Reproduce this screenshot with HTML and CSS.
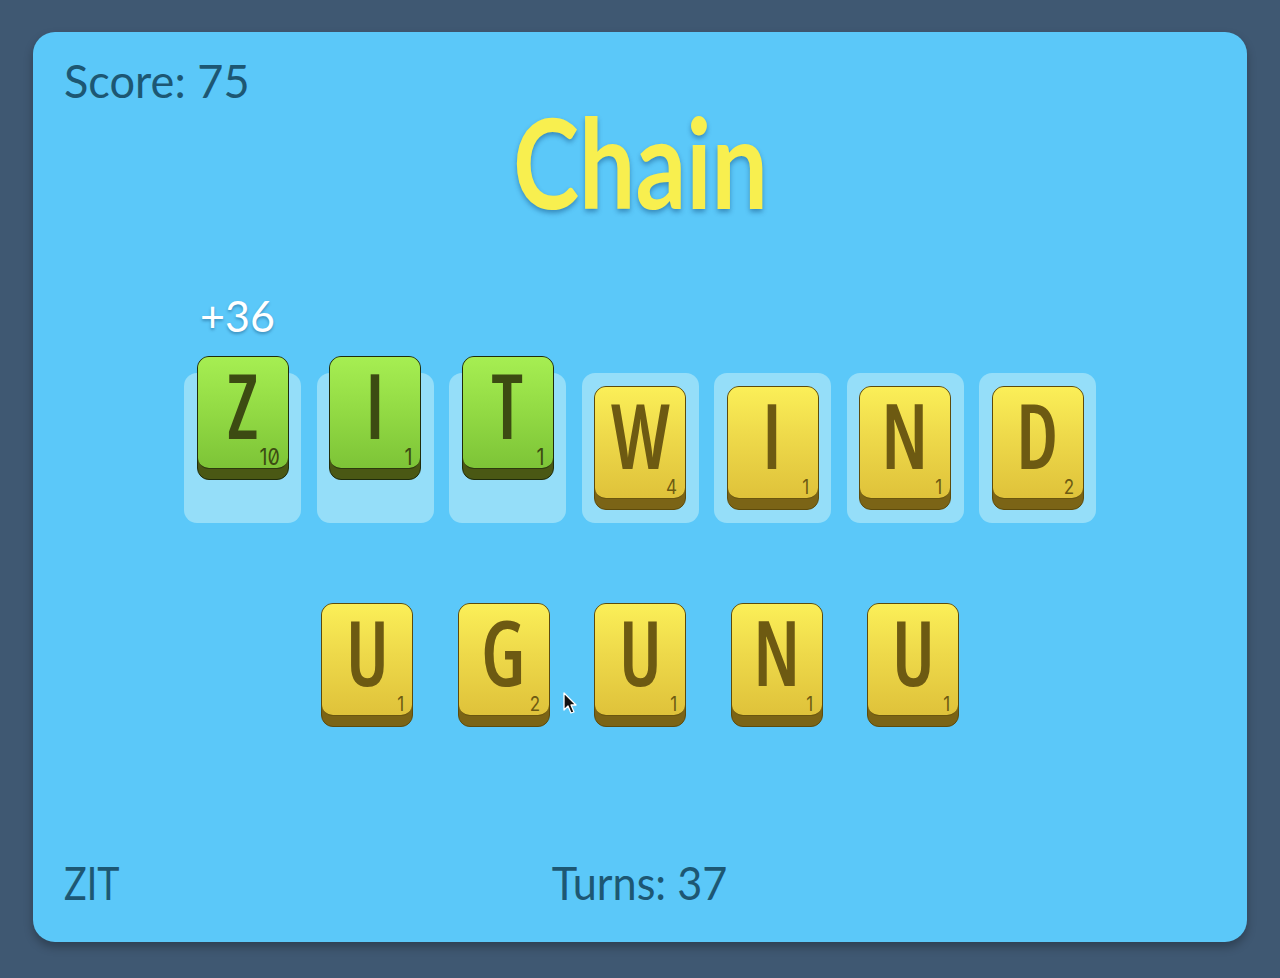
FILE: index.html
```html
<!DOCTYPE html>
<html lang="en">
<head>
<meta charset="utf-8">
<title>Chain</title>
<link rel="stylesheet" href="styles.css">
</head>
<body>
<div class="page">
  <main class="card">
    <div class="score"><span class="narrow">Score: 75</span></div>
    <h1 class="title"><span class="title-text">Chain</span></h1>

    <div class="board">
      <div class="slot">
        <div class="gain"><span class="narrow">+36</span></div>
        <div class="tile green lifted"><div class="face"><span class="letter">Z</span><span class="pts">10</span></div></div>
      </div>
      <div class="slot">
        <div class="tile green lifted"><div class="face"><span class="letter">I</span><span class="pts">1</span></div></div>
      </div>
      <div class="slot">
        <div class="tile green lifted"><div class="face"><span class="letter">T</span><span class="pts">1</span></div></div>
      </div>
      <div class="slot">
        <div class="tile"><div class="face"><span class="letter">W</span><span class="pts">4</span></div></div>
      </div>
      <div class="slot">
        <div class="tile"><div class="face"><span class="letter">I</span><span class="pts">1</span></div></div>
      </div>
      <div class="slot">
        <div class="tile"><div class="face"><span class="letter">N</span><span class="pts">1</span></div></div>
      </div>
      <div class="slot">
        <div class="tile"><div class="face"><span class="letter">D</span><span class="pts">2</span></div></div>
      </div>
    </div>

    <div class="rack">
      <div class="tile"><div class="face"><span class="letter">U</span><span class="pts">1</span></div></div>
      <div class="tile"><div class="face"><span class="letter">G</span><span class="pts">2</span></div>
        <svg class="cursor" width="16" height="24" viewBox="0 0 16 24"><path d="M1 1 L1 18 L5 14 L8 21 L11 20 L8 13 L13 13 Z" fill="#111" stroke="#fff" stroke-width="1.3" stroke-linejoin="round"/></svg>
      </div>
      <div class="tile"><div class="face"><span class="letter">U</span><span class="pts">1</span></div></div>
      <div class="tile"><div class="face"><span class="letter">N</span><span class="pts">1</span></div></div>
      <div class="tile"><div class="face"><span class="letter">U</span><span class="pts">1</span></div></div>
    </div>

    <footer class="footer">
      <div class="word"><span class="narrow">ZIT</span></div>
      <div class="turns"><span class="narrow">Turns: 37</span></div>
      <div></div>
    </footer>
  </main>
</div>
</body>
</html>
```

FILE: styles.css
```css
html, body {
  margin: 0;
  padding: 0;
  background: #3f5872;
}

body {
  font-family: "Lato", "Open Sans", sans-serif;
}

.page {
  padding: 32px 33px 36px 33px;
}

.card {
  width: 1214px;
  height: 910px;
  box-sizing: border-box;
  background: #5bc8f9;
  border-radius: 22px;
  box-shadow: 0 5px 10px rgba(0, 0, 0, 0.28);
  display: flex;
  flex-direction: column;
  padding: 25px 31px 36px 31px;
}

.narrow {
  display: inline-block;
  transform-origin: left center;
}

.score,
.word,
.turns {
  font-size: 47px;
  line-height: 47px;
  color: #1d5773;
  height: 47px;
  white-space: nowrap;
}

.score .narrow {
  transform: scaleX(0.96);
}

.word .narrow {
  transform: scaleX(0.8);
}

.turns .narrow {
  transform: scaleX(0.92);
  transform-origin: center center;
}

.title {
  margin: -5px 0 0 0;
  text-align: center;
  font-weight: 700;
  font-size: 125px;
  line-height: 125px;
  height: 125px;
  color: #f8ef4f;
}

.title-text {
  display: inline-block;
  transform: scaleX(0.8);
  text-shadow: 0 3px 6px rgba(0, 50, 100, 0.4);
}

.board {
  margin-top: 149px;
  display: flex;
  justify-content: center;
  gap: 15.5px;
}

.slot {
  position: relative;
  width: 117px;
  height: 150px;
  box-sizing: border-box;
  padding-top: 13px;
  border-radius: 13px;
  background: #95def9;
  display: flex;
  justify-content: center;
  align-items: flex-start;
}

.gain {
  position: absolute;
  left: 16px;
  top: -79px;
  font-size: 43px;
  line-height: 43px;
  color: #ffffff;
  white-space: nowrap;
  text-shadow: 0 2px 3px rgba(0, 40, 80, 0.35);
}

.tile {
  position: relative;
  width: 92px;
  height: 124px;
  box-sizing: border-box;
  border: 1.5px solid #5d4b0c;
  border-radius: 12px;
  background: #7b6416;
}

.tile .face {
  position: relative;
  height: 112px;
  box-sizing: border-box;
  border-radius: 11px;
  border-bottom: 1.5px solid #6a560f;
  background: linear-gradient(180deg, #fbef58 0%, #eed94a 45%, #dfc23a 100%);
  display: flex;
  justify-content: center;
}

.tile .letter {
  display: inline-block;
  margin-top: 9px;
  font-family: "Open Sans", "Lato", sans-serif;
  font-stretch: 75%;
  font-weight: 580;
  font-size: 90px;
  line-height: 76px;
  height: 76px;
  color: #6d5a12;
  transform: scaleX(0.88);
}

.tile .pts {
  position: absolute;
  right: 8px;
  bottom: 1px;
  font-family: "Inter", "DejaVu Sans", sans-serif;
  font-variant-numeric: slashed-zero;
  font-feature-settings: "zero" 1;
  font-size: 20px;
  line-height: 20px;
  color: #6d5a12;
  transform: scaleX(0.85);
  transform-origin: right center;
}

.tile.green {
  border-color: #1f2c0c;
  background: #4a5814;
}

.tile.green .face {
  border-bottom-color: #2e3a0e;
  background: linear-gradient(180deg, #a6ee52 0%, #94dc45 45%, #7dc437 100%);
}

.tile.green .letter,
.tile.green .pts {
  color: #3c4b12;
}

.tile.green .pts {
  font-size: 23px;
}

.tile.lifted {
  margin-top: -30px;
}

.rack {
  margin-top: 80px;
  display: flex;
  justify-content: center;
  gap: 44.5px;
}

.cursor {
  position: absolute;
  left: 104px;
  top: 88px;
}

.footer {
  margin-top: auto;
  display: grid;
  grid-template-columns: 1fr auto 1fr;
  align-items: end;
}
```
